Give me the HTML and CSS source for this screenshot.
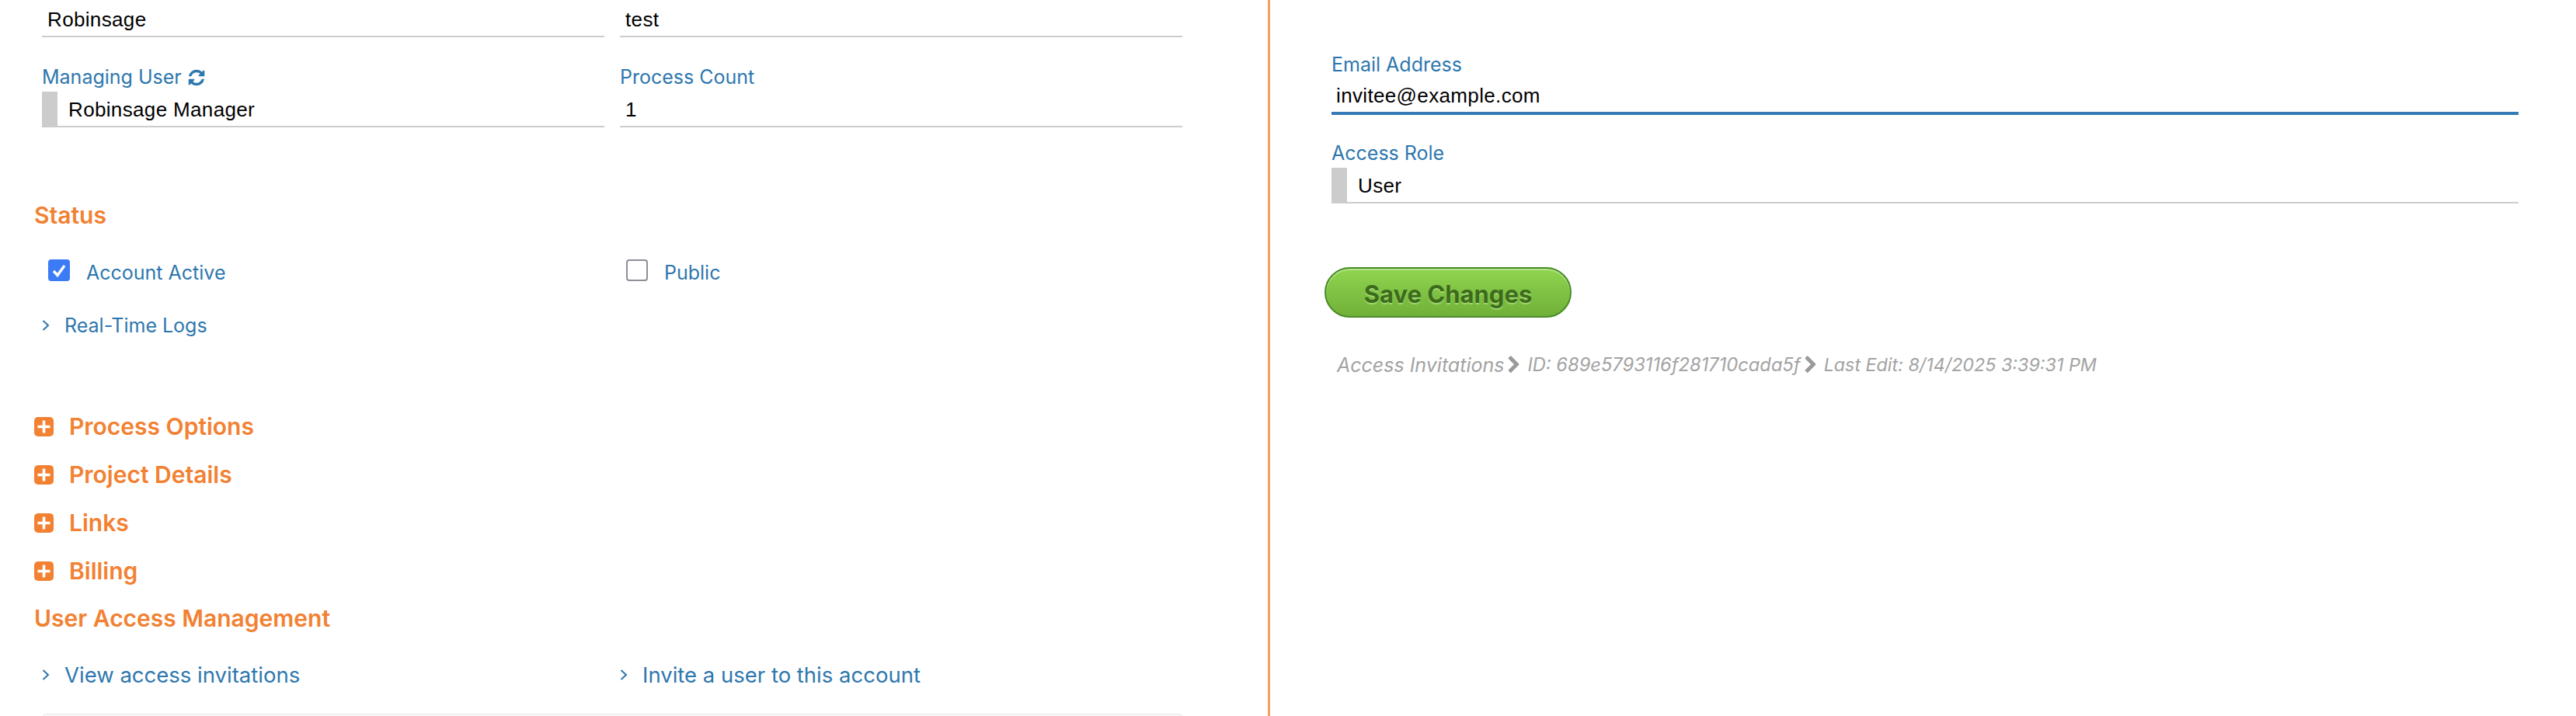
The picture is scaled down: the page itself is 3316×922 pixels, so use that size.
FILE: index.html
```html
<!DOCTYPE html>
<html lang="en">
<head>
    <meta charset="UTF-8">
    <title>Account</title>
    <link rel="stylesheet" href="styles.css">
</head>
<body>
    <svg class="sprites" width="0" height="0">
        <symbol id="chev" viewBox="0 0 10 14"><polyline points="1.5,1 8,7 1.5,13" fill="none" stroke="#2e77ae" stroke-width="2"/></symbol>
        <symbol id="plus" viewBox="0 0 25 25"><rect width="25" height="25" rx="5" fill="#f28132"/><path d="M12.5 4.5v16M4.5 12.5h16" stroke="#fff" stroke-width="3.6"/></symbol>
        <symbol id="fa-chev" viewBox="0 0 1792 1792"><path d="M1363 877l-742 742q-19 19-45 19t-45-19l-166-166q-19-19-19-45t19-45l531-531-531-531q-19-19-19-45t19-45l166-166q19-19 45-19t45 19l742 742q19 19 19 45t-19 45z"/></symbol>
    </svg>
    <div class="layout">
        <div class="left">
            <div class="fields top-fields">
                <div class="field"><div class="value">Robinsage</div></div>
                <div class="field"><div class="value">test</div></div>
            </div>
            <div class="fields second-fields">
                <div class="field">
                    <label class="lbl">Managing User
                        <svg class="refresh" viewBox="0 0 1792 1792"><path d="M1639 1056q0 5-1 7-64 268-268 434.5t-478 166.5q-146 0-282.5-55t-243.5-157l-129 129q-19 19-45 19t-45-19-19-45v-448q0-26 19-45t45-19h448q26 0 45 19t19 45-19 45l-137 137q71 66 161 102t187 36q134 0 250-65t186-179q11-17 53-117 8-23 30-23h192q13 0 22.5 9.5t9.5 22.5zm25-800v448q0 26-19 45t-45 19h-448q-26 0-45-19t-19-45 19-45l138-138q-148-137-349-137-134 0-250 65t-186 179q-11 17-53 117-8 23-30 23h-199q-13 0-22.5-9.5t-9.5-22.5v-7q65-268 270-434.5t480-166.5q146 0 284 55.5t245 156.5l130-129q19-19 45-19t45 19 19 45z"/></svg>
                    </label>
                    <div class="value select">Robinsage Manager</div>
                </div>
                <div class="field">
                    <label class="lbl">Process Count</label>
                    <div class="value">1</div>
                </div>
            </div>

            <h3 class="section status-title">Status</h3>
            <div class="fields checks">
                <div class="check"><span class="box on"><svg viewBox="0 0 28 28"><polyline points="7,15 12,20.5 21,8" fill="none" stroke="#fff" stroke-width="3.4"/></svg></span><a>Account Active</a></div>
                <div class="check"><span class="box"></span><a>Public</a></div>
            </div>
            <div class="fields logs">
                <a class="link small"><svg class="chev"><use href="#chev"/></svg>Real-Time Logs</a>
            </div>

            <div class="collapsibles">
                <h3 class="section toggle"><svg class="plus"><use href="#plus"/></svg>Process Options</h3>
                <h3 class="section toggle"><svg class="plus"><use href="#plus"/></svg>Project Details</h3>
                <h3 class="section toggle"><svg class="plus"><use href="#plus"/></svg>Links</h3>
                <h3 class="section toggle"><svg class="plus"><use href="#plus"/></svg>Billing</h3>
            </div>
            <h3 class="section access-title">User Access Management</h3>
            <div class="fields access-links">
                <a class="link"><svg class="chev"><use href="#chev"/></svg>View access invitations</a>
                <a class="link"><svg class="chev"><use href="#chev"/></svg>Invite a user to this account</a>
            </div>
            <div class="card-edge"></div>
        </div>

        <div class="right">
            <label class="lbl">Email Address</label>
            <div class="value focused">invitee@example.com</div>
            <label class="lbl role-lbl">Access Role</label>
            <div class="value select">User</div>
            <button type="button" class="save">Save Changes</button>
            <div class="crumbs">
                <span class="crumb-first">Access Invitations</span><svg class="crumb-chev"><use href="#fa-chev"/></svg>
                <span class="crumb-id">ID: 689e5793116f281710cada5f</span><svg class="crumb-chev"><use href="#fa-chev"/></svg>
                <span class="crumb-last">Last Edit: 8/14/2025 3:39:31 PM</span>
            </div>
        </div>
    </div>
</body>
</html>
```

FILE: styles.css
```css
* {
    box-sizing: border-box;
}
body {
    margin: 0;
    background-color: #fff;
    font-family: "Inter", "Liberation Sans", sans-serif;
    overflow: hidden;
}
.sprites {
    display: block;
    height: 0;
}
.layout {
    display: flex;
    height: 922px;
    overflow: hidden;
}
.left {
    width: 1632px;
    padding-left: 44px;
}
.right {
    flex: 1;
    border-left: 3px solid #f5a05f;
    padding: 64px 74px 0 79px;
}
.fields {
    display: grid;
    grid-template-columns: 724px 724px;
    column-gap: 20px;
    margin-left: 10px;
}
.value {
    height: 46px;
    border-bottom: 2px solid #ccc;
    padding: 5px 0 0 7px;
    font-family: "Liberation Sans", Arial, sans-serif;
    font-size: 26px;
    letter-spacing: 0.35px;
    line-height: 36px;
    color: #000;
}
.top-fields .value {
    height: 48px;
    padding-top: 7px;
}
.lbl {
    display: block;
    height: 38px;
    font-size: 25px;
    line-height: 38px;
    color: #2e77ae;
}
.select {
    border-left: 20px solid #ccc;
    padding-left: 14px;
}
.focused {
    border-bottom: 4px solid #337ab7;
    padding: 3px 0 0 6px;
}
.refresh {
    width: 24px;
    height: 24px;
    fill: #2e77ae;
    vertical-align: -4px;
}
.top-fields {
    height: 48px;
}
.second-fields {
    margin-top: 32px;
}
.section {
    margin: 0;
    font-size: 30px;
    font-weight: 600;
    line-height: 40px;
    color: #f28132;
}
.status-title {
    margin-top: 93px;
}
.checks {
    margin-top: 37px;
}
.check {
    display: flex;
    align-items: center;
    padding-left: 8px;
    height: 28px;
}
.check a {
    font-size: 25px;
    color: #2e77ae;
    margin-left: 21px;
    padding-top: 5px;
}
.box {
    width: 28px;
    height: 28px;
    border: 2px solid #8e8e99;
    border-radius: 4px;
}
.box.on {
    background-color: #3b7bf6;
    border: none;
}
.box svg {
    display: block;
    width: 28px;
    height: 28px;
}
.logs {
    margin-top: 40px;
}
.link {
    display: flex;
    align-items: center;
    font-size: 27.5px;
    line-height: 34px;
    color: #2e77ae;
}
.link.small {
    font-size: 25px;
}
.chev {
    width: 10px;
    height: 14px;
    margin-right: 19px;
    flex: none;
}
.collapsibles {
    margin-top: 82px;
}
.toggle {
    display: flex;
    align-items: center;
    height: 62px;
}
.plus {
    width: 25px;
    height: 25px;
    margin-right: 20px;
    flex: none;
}
.access-title {
    height: 40px;
    margin-top: 10px;
}
.access-links {
    margin-top: 36px;
}
.card-edge {
    margin: 33px 109px 0 10px;
    height: 10px;
    border-top: 2px solid #eee;
    border-radius: 6px 6px 0 0;
}
.role-lbl {
    margin-top: 30px;
}
.save {
    display: block;
    width: 318px;
    height: 65px;
    margin: 82px 0 0 -9px;
    border: 2px solid #4a8a2a;
    border-radius: 33px;
    background: linear-gradient(#90d550, #70b038);
    box-shadow: inset 0 2px 0 #b5e58c;
    font-family: "Inter", "Liberation Sans", sans-serif;
    font-size: 31px;
    font-weight: 700;
    color: #3d6b1c;
    text-shadow: 0 2px 1px #a0d870;
    padding: 3px 0 0;
}
.crumbs {
    display: flex;
    align-items: center;
    margin: 44px 0 0 7px;
    font-size: 24px;
    font-style: italic;
    color: #a3a3a3;
    line-height: 34px;
}
.crumb-first {
    font-size: 25px;
}
.crumb-id {
    font-size: 23.7px;
}
.crumb-last {
    font-size: 23.3px;
}
.crumb-chev {
    width: 24px;
    height: 24px;
    fill: #9a9a9a;
    margin: 0 5px 0 1px;
}
```
